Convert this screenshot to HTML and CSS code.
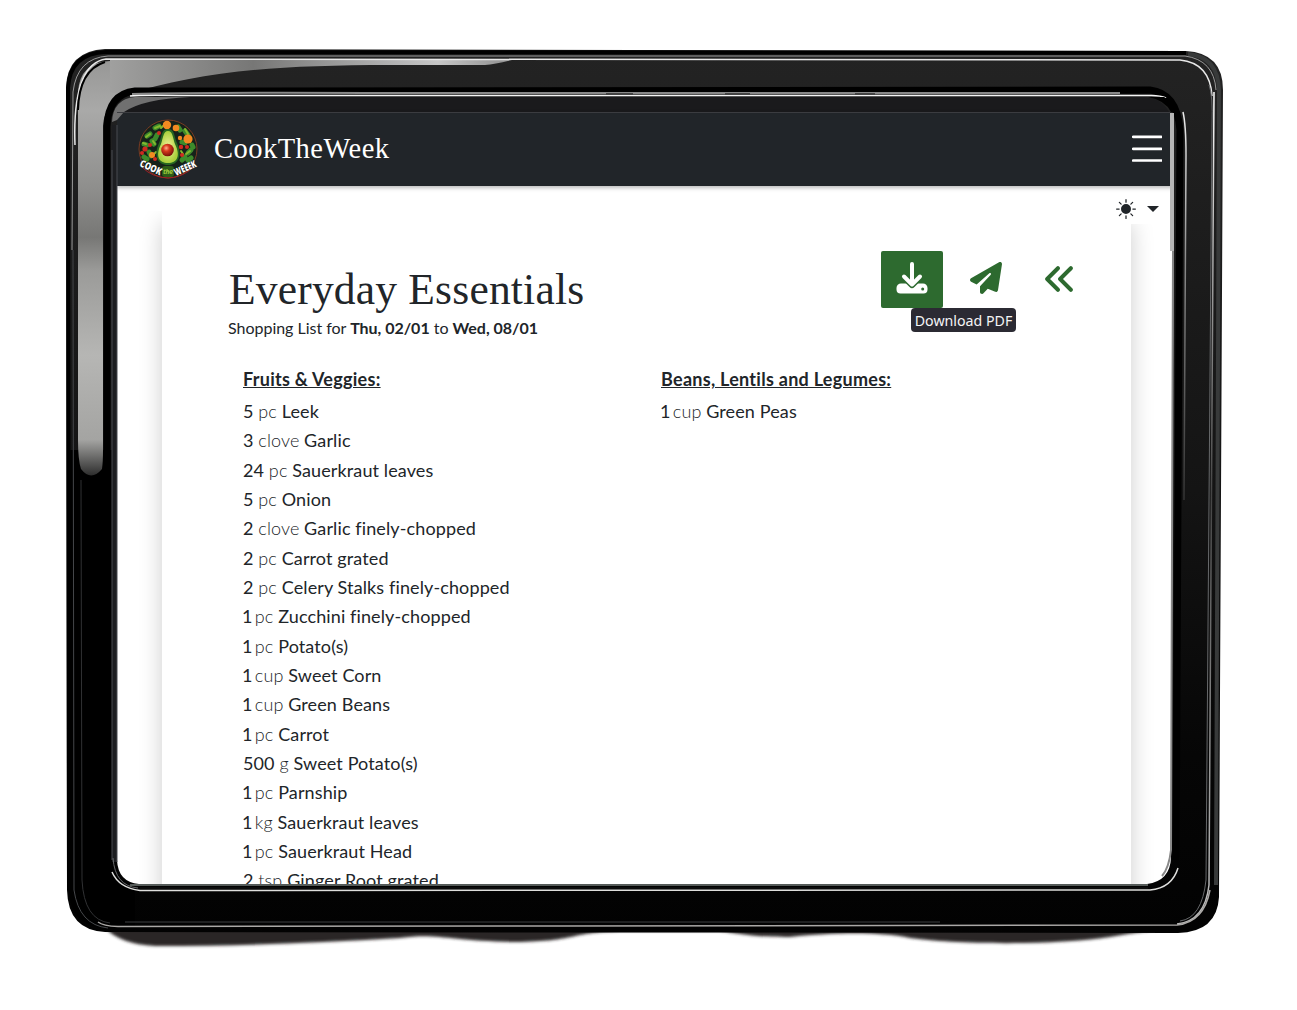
FILE: index.html
```html
<!DOCTYPE html>
<html lang="en">
<head>
<meta charset="utf-8">
<title>CookTheWeek</title>
<link rel="stylesheet" href="styles.css">
</head>
<body>
<div class="stage">
  <main class="screen">
    <div class="bezel-bar"></div>
    <header class="navbar">
      <svg class="logo" viewBox="0 0 60 60">
        <defs>
          <radialGradient id="seed" cx=".4" cy=".35" r=".7"><stop offset="0" stop-color="#ffb08a"/><stop offset=".35" stop-color="#d93a1d"/><stop offset="1" stop-color="#6d0c08"/></radialGradient>
          <radialGradient id="flesh"><stop offset="0" stop-color="#f4f29a"/><stop offset="1" stop-color="#a9cf3b"/></radialGradient>
        </defs>
        <circle cx="30" cy="30" r="29" fill="#16221a" stroke="#7a3b22"/>
        <g fill="none" stroke-width="5" stroke-linecap="round">
          <path stroke="#3d8b2b" d="M9 17l3-2M17 9l4-2M6 25l3 1M14 22l2 3M40 8l2 3M47 12l3 4M53 31l-3 3M47 38l-3 3M11 33l2 4M19 16l-2 4M44 23l3 1M54 26l1 2M6 38l3 2M50 41l3-2"/>
          <path stroke="#84b72e" stroke-width="2" d="M8 18l4-3M17 9l5-2M15 22l2 3M47 10l3 5M52 32l-4 3M43 32l2 3M18 33l-3 3M23 9l2-2M5 24l3 1"/>
        </g>
        <g fill="#f28a21"><circle cx="29" cy="6" r="4.200"/><circle cx="38" cy="9" r="3.300"/><circle cx="50" cy="20" r="4.600"/><circle cx="14" cy="36" r="3"/><circle cx="42" cy="19" r="2.200"/></g>
        <g fill="#cf2a20"><circle cx="7" cy="30" r="2.600"/><circle cx="12" cy="26" r="2"/><circle cx="21" cy="14" r="2"/><circle cx="43" cy="28" r="2.200"/><circle cx="49" cy="28" r="2"/><circle cx="4" cy="34" r="2"/><circle cx="17" cy="40" r="2"/><circle cx="44" cy="36" r="2"/></g>
        <path d="M30 10c-7 0-6 8-9 14-6 13-1 22 9 22s15-9 9-22c-3-6-2-14-9-14z" fill="#276721"/>
        <path d="M30 12c-5 0-5 8-7 13-6 12-2 19 7 19s13-7 7-19c-2-5-2-13-7-13z" fill="url(#flesh)"/>
        <circle cx="29.500" cy="31" r="6.300" fill="url(#seed)"/>
        <path d="M5 49Q14 58 30 59Q46 58 55 48" fill="none" stroke="#a32026"/>
        <rect x="24" y="47" width="12" height="11" rx="3" fill="#2d5c18"/>
        <g class="logo-text"><text transform="translate(1 47) rotate(24)" textLength="23" lengthAdjust="spacingAndGlyphs">COOK</text><text transform="translate(38 57) rotate(-24)" textLength="23" lengthAdjust="spacingAndGlyphs">WEEEK</text></g>
        <text class="logo-the" x="25" y="55" textLength="10">the</text>
      </svg>
      <span class="brand">CookTheWeek</span>
      <svg class="burger" viewBox="0 0 30 28"><path d="M1.200 1.800h28M1.200 13.800h28M1.200 25.500h28" stroke="#fff" stroke-width="2.700" stroke-linecap="round"/></svg>
    </header>
    <div class="theme">
      <svg class="sun" viewBox="0 0 16 16" fill="#212529"><path d="M8 12a4 4 0 1 0 0-8 4 4 0 0 0 0 8zM8 0a.5.5 0 0 1 .5.5v2a.5.5 0 0 1-1 0v-2A.5.5 0 0 1 8 0zm0 13a.5.5 0 0 1 .5.5v2a.5.5 0 0 1-1 0v-2A.5.5 0 0 1 8 13zm8-5a.5.5 0 0 1-.5.5h-2a.5.5 0 0 1 0-1h2a.5.5 0 0 1 .5.5zM3 8a.5.5 0 0 1-.5.5h-2a.5.5 0 0 1 0-1h2A.5.5 0 0 1 3 8zm10.657-5.657a.5.5 0 0 1 0 .707l-1.414 1.415a.5.5 0 1 1-.707-.708l1.414-1.414a.5.5 0 0 1 .707 0zm-9.193 9.193a.5.5 0 0 1 0 .707L3.050 13.657a.5.5 0 0 1-.707-.707l1.414-1.414a.5.5 0 0 1 .707 0zm9.193 2.121a.5.5 0 0 1-.707 0l-1.414-1.414a.5.5 0 0 1 .707-.707l1.414 1.414a.5.5 0 0 1 0 .707zM4.464 4.465a.5.5 0 0 1-.707 0L2.343 3.050a.5.5 0 1 1 .707-.707l1.414 1.414a.5.5 0 0 1 0 .708z"/></svg>
      <span class="caret"></span>
    </div>
    <section class="sheet">
      <div class="sheet-head">
        <div class="titles">
          <h1>Everyday Essentials</h1>
          <p class="sub">Shopping List for <b>Thu, 02/01</b> to <b>Wed, 08/01</b></p>
        </div>
        <div class="actions">
          <div class="download">
            <svg viewBox="0 0 32 32"><path d="M5 21.500h22a4.500 4.500 0 0 1 4.500 4.500v1.500a4 4 0 0 1-4 4h-23a4 4 0 0 1-4-4V26A4.500 4.500 0 0 1 5 21.500z" fill="#fff"/><path d="M16 2v20M8 14.500l8 8 8-8" fill="none" stroke="#2d6a2f" stroke-width="7" stroke-linejoin="round"/><path d="M16 2v20M8 14.500l8 8 8-8" fill="none" stroke="#fff" stroke-width="4" stroke-linecap="round" stroke-linejoin="round"/><circle cx="26.700" cy="27" r="1.500" fill="#2d6a2f"/></svg>
            <span class="tooltip">Download PDF</span>
          </div>
          <svg class="plane" viewBox="0 0 512 512"><path fill="#2d6a2f" d="M498.100 5.600c10.100 7 15.400 19.100 13.500 31.200l-64 416c-1.500 9.700-7.400 18.200-16 23s-18.900 5.400-28 1.600L284 427.700l-68.500 74.100c-8.900 9.700-22.900 12.900-35.200 8.100S160 493.200 160 480v-83.600c0-4 1.500-7.800 4.200-10.800L331.800 202.800c5.800-6.300 5.600-16-.4-22s-15.700-6.400-22-.7L106 360.800l-88.300-44.200C7.100 311.300.3 300.700 0 288.900s5.900-22.800 16.100-28.700l448-256c10.700-6.100 23.900-5.500 34 1.400z"/></svg>
          <svg class="back" viewBox="0 0 26 24"><path d="M12 2L2 12l10 10M24 2L14 12l10 10" fill="none" stroke="#2d6a2f" stroke-width="3.700" stroke-linecap="round" stroke-linejoin="round"/></svg>
        </div>
      </div>
      <div class="lists">
        <div class="list">
          <h2>Fruits &amp; Veggies:</h2>
          <ul>
            <li>5 <i>pc</i> Leek</li>
            <li>3 <i>clove</i> Garlic</li>
            <li>24 <i>pc</i> Sauerkraut leaves</li>
            <li>5 <i>pc</i> Onion</li>
            <li>2 <i>clove</i> Garlic finely-chopped</li>
            <li>2 <i>pc</i> Carrot grated</li>
            <li>2 <i>pc</i> Celery Stalks finely-chopped</li>
            <li class="one">1 <i>pc</i> Zucchini finely-chopped</li>
            <li class="one">1 <i>pc</i> Potato(s)</li>
            <li class="one">1 <i>cup</i> Sweet Corn</li>
            <li class="one">1 <i>cup</i> Green Beans</li>
            <li class="one">1 <i>pc</i> Carrot</li>
            <li>500 <i>g</i> Sweet Potato(s)</li>
            <li class="one">1 <i>pc</i> Parnship</li>
            <li class="one">1 <i>kg</i> Sauerkraut leaves</li>
            <li class="one">1 <i>pc</i> Sauerkraut Head</li>
            <li>2 <i>tsp</i> Ginger Root grated</li>
          </ul>
        </div>
        <div class="list">
          <h2>Beans, Lentils and Legumes:</h2>
          <ul><li class="one">1 <i>cup</i> Green Peas</li></ul>
        </div>
      </div>
    </section>
  </main>
  <svg class="frame" viewBox="0 0 1297 1010" fill="none">
    <defs>
      <linearGradient id="body" x1="0" y1="49" x2="0" y2="932" gradientUnits="userSpaceOnUse"><stop offset="0" stop-color="#232323"/><stop offset=".5" stop-color="#141414"/><stop offset=".8" stop-color="#060606"/><stop offset="1" stop-color="#020202"/></linearGradient>
      <linearGradient id="shine" x1="0" y1="60" x2="0" y2="482" gradientUnits="userSpaceOnUse"><stop offset="0" stop-color="#979796"/><stop offset=".12" stop-color="#a9a9a8"/><stop offset=".3" stop-color="#8f8f8d"/><stop offset=".42" stop-color="#777775"/><stop offset=".5" stop-color="#9b9b99"/><stop offset=".7" stop-color="#b6b6b4"/><stop offset=".9" stop-color="#a4a4a2"/><stop offset="1" stop-color="#181818"/></linearGradient>
      <linearGradient id="topShine" x1="110" y1="0" x2="520" y2="0" gradientUnits="userSpaceOnUse"><stop offset="0" stop-color="#a0a09f"/><stop offset=".35" stop-color="#777776"/><stop offset=".8" stop-color="#c6c6c6"/><stop offset="1" stop-color="#888"/></linearGradient>
      <linearGradient id="glintV" x1="0" y1="90" x2="0" y2="900" gradientUnits="userSpaceOnUse"><stop offset="0" stop-color="#fff"/><stop offset=".25" stop-color="#999"/><stop offset=".5" stop-color="#444"/><stop offset="1" stop-color="#bbb"/></linearGradient>
      <linearGradient id="inR" x1="0" y1="110" x2="0" y2="500" gradientUnits="userSpaceOnUse"><stop offset="0" stop-color="#eee"/><stop offset=".4" stop-color="#888"/><stop offset="1" stop-color="#333"/></linearGradient>
      <filter id="soft" x="-5%" y="-50%" width="110%" height="200%"><feGaussianBlur stdDeviation="1.500"/></filter>
    </defs>
    <path filter="url(#soft)" fill="#292526" d="M105 928Q120 944 155 946Q270 946 400 938C440 933 445 941 515 942C580 941 565 933 620 931H720C740 934 755 937 790 937C840 932 880 932 910 938C950 944 1050 946 1110 937Q1150 930 1180 928z"/>
    <path fill="url(#body)" fill-rule="evenodd" d="M105 49L1186 51Q1223 53 1223 90L1219 897Q1217 932 1178 933L105 932Q68 930 67 890L66 88Q67 51 105 49zM135 97Q117 99 117 122V860Q118 882 139 884H1147Q1170 881 1171 858L1174 130Q1171 99 1145 97z"/>
    <path stroke="#000" stroke-width="4" d="M69 890L68 88Q70 53 106 52L1186 53"/>
    <path fill="#000" d="M68 450H112V860Q113 884 135 889V928H105Q70 925 69 890z"/>
    <path stroke="#383a3a" stroke-width="4" d="M1188 54Q1218 57 1219 90L1216 885"/>
    <path fill="url(#shine)" d="M78 92Q80 62 110 61L225 65Q150 82 128 94Q104 103 103 126V450Q103 462 102 469Q91 482 81 469Q78 460 78 440z"/>
    <path fill="url(#topShine)" d="M110 60H512Q495 64 485 65H390C270 65 200 72 124 95L110 92z"/>
    <path stroke="#000" stroke-width="7" d="M107 880V127Q108 94 135 91L1150 90Q1177 93 1180 130L1176 860"/>
    <path stroke="#999" stroke-width="1" d="M72 250L73 92Q77 58 108 56L1185 56Q1214 60 1216 90"/>
    <path stroke="#e8e8e8" stroke-width="1.500" d="M75 145Q72 64 106 59L1180 60Q1210 63 1212 96"/>
    <path stroke="#000" stroke-width="2" d="M78 110Q79 70 105 62"/>
    <path stroke="#45474a" d="M73 250L74 890Q79 925 108 928"/>
    <path stroke="#303133" stroke-width="1" d="M81 480L82 880Q84 920 110 923"/>
    <path stroke="url(#glintV)" stroke-width="1.500" d="M1214 92L1209 885Q1205 921 1177 924"/>
    <path stroke="#67696b" stroke-width="1" d="M1209 85Q1213 95 1212 125L1206 880Q1202 918 1180 921"/>
    <path stroke="#aaa8a6" stroke-width="1.500" d="M98 922Q103 926 118 926.500L560 926L1177 925Q1204 922 1210 890"/>
    <path stroke="#3c3e40" d="M125 922H940"/>
    <path stroke="#1d1e21" stroke-width="5" d="M114.500 125V862"/>
    <path stroke="#494b50" d="M112 150V860M117 125V862"/>
    <path stroke="#66686a" d="M113 858Q115 886 138 888"/>
    <path stroke="#555b59" stroke-width="2" d="M130 885H1148"/>
    <path stroke="#0b0c0c" stroke-width="2" d="M140 888H1148"/>
    <path stroke="#dededc" stroke-width="1.500" d="M112 872Q119 888 140 890.500L1150 890Q1172 888 1178 868"/>
    <path stroke="#888" stroke-width="2" d="M132 94Q200 92 400 93H1120"/>
    <path stroke="#f5f5f5" stroke-width="1.500" d="M130 96Q138 95 180 95.500H1148Q1160 95 1166 98"/>
    <path stroke="#444" stroke-width="2" d="M606 94h27M725 94h25M855 94h20"/>
    <path fill="#707070" d="M112 122Q113 99 135 97H190Q143 99 124 112L117 120z"/>
    <path fill="#000" d="M1148 97Q1165 100 1171 112H1176Q1174 101 1164 97z"/>
    <path stroke="url(#inR)" stroke-width="1.500" d="M1183 112Q1186 125 1186 155L1184 500"/>
    <path stroke="#b4b4b4" stroke-width="4" d="M1172 113V251"/>
    <path stroke="#888" stroke-width="2" d="M1173 251L1171 850Q1169 868 1162 876"/>
    <path stroke="#3b3c40" d="M117 112.500H1170"/>
  </svg>
</div>
</body>
</html>
```
FILE: styles.css
```css
* { box-sizing: border-box; }
body { margin: 0; background: #fff; color: #212529; font-family: Lato, sans-serif; font-variant-ligatures: none; }
h1, h2, p, ul { margin: 0; padding: 0; font-weight: 400; }
ul { list-style: none; }
i { font-style: normal; font-weight: 300; }
.stage { position: relative; width: 1297px; height: 1010px; padding: 97px 123px 0 117px; overflow: hidden; }
.frame { position: absolute; z-index: 5; inset: 0; width: 1297px; height: 1010px; pointer-events: none; }
.screen { width: 1057px; height: 788px; overflow: hidden; }
.bezel-bar { height: 15px; background: #1a1a1c; }
.navbar { position: relative; z-index: 2; height: 74px; background: #212529; display: flex; align-items: center; padding: 0 12px 0 21px; box-shadow: 0 2px 4px #0004; }
.logo { width: 60px; height: 60px; overflow: visible; }
.logo-text { font: 800 10px "Open Sans", sans-serif; fill: #fff; }
.logo-the { font: italic 700 7px "Open Sans", sans-serif; fill: #9bc43c; }
.brand { margin-left: 16px; font: 28.500px "Liberation Serif", serif; color: #fff; letter-spacing: .480px; }
.burger { width: 30px; height: 28px; margin-left: auto; }
.theme { position: relative; z-index: 1; width: 70px; height: 38px; margin: 0 0 -13px auto; background: #fff; display: flex; justify-content: flex-end; align-items: center; padding: 8px 15px 0 0; gap: 11px; }
.sun { width: 20px; height: 20px; }
.caret { border: 6px solid transparent; border-top-color: #212529; border-bottom: 0; }
.sheet { width: 969px; height: 700px; margin-left: 45px; padding: 40px 58px 0 67px; box-shadow: 0 12px 22px #0003; clip-path: inset(0 -40px 0 -40px); }
.sheet-head { display: flex; justify-content: space-between; height: 99px; }
h1 { font: 43.500px/48px "Liberation Serif", serif; margin-top: 14px; letter-spacing: .200px; white-space: nowrap; }
.sub { font-size: 16px; line-height: 24px; margin: 3px 0 0 -1px; letter-spacing: -.02px; }
.sub b { font-weight: 700; }
.actions { display: flex; align-items: flex-start; }
.download { position: relative; width: 62px; height: 57px; background: #2d6a2f; border-radius: 2px; padding: 11px 15px; }
.download svg { width: 32px; height: 32px; }
.tooltip { position: absolute; left: 30px; top: 57px; width: 105px; height: 24px; border-radius: 4px; background: #2b2a33; color: #f4f4f6; font: 14.200px/26px "Noto Sans", sans-serif; text-align: center; white-space: nowrap; }
.plane { width: 32px; height: 32px; margin: 11px 0 0 27px; }
.back { width: 28px; height: 26px; margin: 15px 0 0 43px; }
.lists { display: grid; grid-template-columns: 418px 1fr; padding: 14px 0 0 14px; }
h2 { font-size: 18px; line-height: 30px; font-weight: 700; text-decoration: underline; margin-bottom: 3px; white-space: nowrap; letter-spacing: .270px; }
li { font-size: 18px; line-height: 29.330px; white-space: nowrap; letter-spacing: .12px; }
.one { text-indent: -1px; }
.one i { margin-left: -2.500px; }
```
